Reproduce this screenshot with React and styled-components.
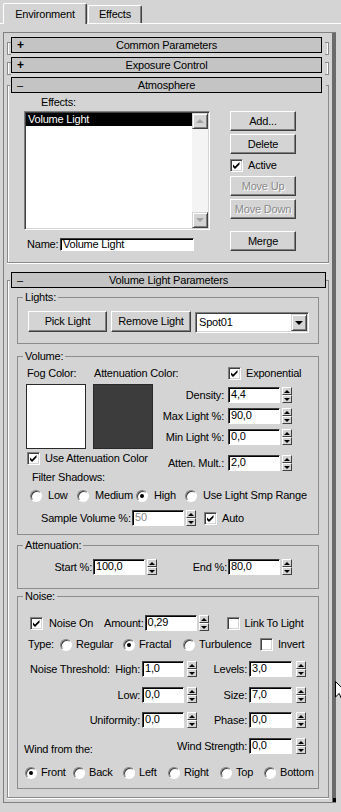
import React from "react";
import styled, { createGlobalStyle, css } from "styled-components";

const BG = "#d4d4d4";
const FONT = '"Liberation Sans", Arial, sans-serif';

const GlobalStyle = createGlobalStyle`
  html, body { margin: 0; padding: 0; background: ${BG}; }
  body {
    font-family: ${FONT};
    font-size: 11px;
    letter-spacing: -0.2px;
    line-height: 13px;
    color: #000;
  }
  * { box-sizing: border-box; }
`;

const Page = styled.div`
  position: relative;
  width: 341px;
  height: 812px;
  overflow: hidden;
  background: ${BG};
`;

/* ---------- tabs ---------- */
const TabBar = styled.div`
  display: flex;
  align-items: flex-end;
  height: 24px;
  padding-left: 3px;
  box-shadow: inset 0 -1px 0 #fff;
`;

const Tab = styled.div`
  display: flex;
  align-items: center;
  justify-content: center;
  flex: none;
  width: ${(p) => p.$w}px;
  height: ${(p) => (p.$active ? 21 : 18)}px;
  margin: 0 0 ${(p) => (p.$active ? 0 : 1)}px ${(p) => (p.$active ? 0 : 1)}px;
  background: ${BG};
  border-top: 1px solid #fff;
  border-left: 1px solid #fff;
  border-right: 1px solid #404040;
  box-shadow: inset -1px 0 0 #808080;
  border-radius: 2px 2px 0 0;
`;

/* ---------- rollout panel ---------- */
const Panel = styled.div`
  display: flex;
  width: 333px;
  margin: 8px 0 0 3px;
  border: 1px solid #808080;
  border-right: none;
`;

const PanelContent = styled.div`
  flex: 0 0 328px;
  min-width: 0;
  display: flex;
  flex-direction: column;
  padding: 4px 3px 4px 3px;
`;

const ScrollStrip = styled.div`
  flex: 0 0 4px;
  background: #6b6b6b;
  display: flex;
  flex-direction: column;
  justify-content: flex-end;
`;

const ScrollEnd = styled.div`
  width: 3px;
  height: 4px;
  margin-left: 1px;
  background: #000;
`;

const Rollout = styled.section`
  position: relative;
  min-width: 0;
  padding: 0 ${(p) => p.$pr}px 0 4px;
  margin-bottom: ${(p) => p.$mb || 0}px;
  &::before,
  &::after {
    content: "";
    position: absolute;
    pointer-events: none;
  }
  ${(p) =>
    p.$open
      ? css`
          &::before {
            left: 0;
            right: 0;
            top: 8px;
            bottom: 0;
            border: 1px solid #8a8a8a;
            border-top: none;
            box-shadow: inset 1px 0 0 #fff, 0 1px 0 #fff;
          }
          &::after {
            left: 0;
            right: 0;
            top: 8px;
            height: 1px;
            background: linear-gradient(
              to right,
              #8a8a8a 3px,
              transparent 3px,
              transparent calc(100% - 3px),
              #8a8a8a calc(100% - 3px)
            );
          }
        `
      : css`
          &::before {
            left: 0;
            top: 5px;
            width: 3px;
            height: 11px;
            border: 1px solid #8a8a8a;
            border-right: none;
            box-shadow: inset 1px 0 0 #fff;
          }
          &::after {
            right: 0;
            top: 5px;
            width: 3px;
            height: 11px;
            border: 1px solid #8a8a8a;
            border-left: none;
            box-shadow: inset -1px 0 0 #fff;
          }
        `}
`;

const RollHeader = styled.div`
  position: relative;
  z-index: 1;
  display: grid;
  grid-template-columns: 20px 1fr 20px;
  align-items: center;
  height: 16px;
  border: 1px solid #000;
  background: #c4c4c4;
`;

const Sign = styled.span`
  padding-left: 5px;
  font-weight: ${(p) => (p.$plus ? 700 : 400)};
  font-size: ${(p) => (p.$plus ? 12 : 11)}px;
  line-height: 13px;
`;

const Title = styled.span`
  text-align: center;
  white-space: nowrap;
  line-height: 13px;
`;

const RolloutHead = ({ sign, title }) => (
  <RollHeader>
    <Sign $plus={sign === "+"}>{sign}</Sign>
    <Title>{title}</Title>
    <span />
  </RollHeader>
);

/* ---------- common controls ---------- */
const Button = styled.div`
  display: flex;
  align-items: center;
  justify-content: center;
  flex: none;
  width: ${(p) => p.$w}px;
  height: ${(p) => p.$h || 20}px;
  margin-top: ${(p) => p.$mt || 0}px;
  background: ${BG};
  border: 1px solid;
  border-color: #fff #404040 #404040 #fff;
  box-shadow: inset -1px -1px 0 #808080;
  white-space: nowrap;
  color: ${(p) => (p.$disabled ? "#8a8a8a" : "#000")};
  text-shadow: ${(p) => (p.$disabled ? "1px 1px 0 #fff" : "none")};
`;

const Arrow = styled.span`
  width: 0;
  height: 0;
  border-left: ${(p) => p.$s}px solid transparent;
  border-right: ${(p) => p.$s}px solid transparent;
  ${(p) =>
    p.$dir === "up"
      ? `border-bottom: ${p.$h}px solid ${p.$c};`
      : `border-top: ${p.$h}px solid ${p.$c};`}
`;

const NumBox = styled.div`
  flex: none;
  width: ${(p) => p.$w}px;
  height: ${(p) => p.$h || 16}px;
  background: #fff;
  border: 1px solid;
  border-color: #404040 #fff #fff #404040;
  box-shadow: inset 1px 1px 0 #000;
  padding-left: 2px;
  line-height: ${(p) => (p.$h ? p.$h - 2 : 12)}px;
  white-space: nowrap;
  overflow: hidden;
  color: ${(p) => (p.$dim ? "#8a8a8a" : "#000")};
`;

const Spinner = styled.span`
  display: flex;
  flex-direction: column;
  flex: none;
  width: 10px;
  height: 16px;
  margin-left: ${(p) => p.$ml}px;
`;

const SpinHalf = styled.span`
  flex: 1;
  display: flex;
  align-items: center;
  justify-content: center;
  background: ${BG};
  border: 1px solid;
  border-color: #fff #404040 #404040 #fff;
`;

const FieldWrap = styled.div`
  display: flex;
  align-items: center;
  flex: none;
`;

const FieldLabel = styled.span`
  white-space: nowrap;
  margin-right: ${(p) => p.$gap}px;
  ${(p) => (p.$w ? `width: ${p.$w}px; text-align: right;` : "")}
`;

const Field = ({ label, value, lw, gap = 2, iw = 52, sg = 2, dim }) => (
  <FieldWrap>
    {label && (
      <FieldLabel $w={lw} $gap={gap}>
        {label}
      </FieldLabel>
    )}
    <NumBox $w={iw} $dim={dim}>
      {value}
    </NumBox>
    <Spinner $ml={sg}>
      <SpinHalf>
        <Arrow $dir="up" $s={3} $h={3} $c="#000" />
      </SpinHalf>
      <SpinHalf>
        <Arrow $dir="down" $s={3} $h={3} $c="#000" />
      </SpinHalf>
    </Spinner>
  </FieldWrap>
);

const CheckBox = styled.span`
  display: flex;
  flex: none;
  width: 13px;
  height: 13px;
  background: #fff;
  border: 1px solid;
  border-color: #808080 #fff #fff #808080;
  box-shadow: inset 1px 1px 0 #404040, inset -1px -1px 0 ${BG};
`;

const OptionWrap = styled.div`
  display: flex;
  align-items: center;
  flex: none;
  height: 13px;
  white-space: nowrap;
  margin-top: ${(p) => p.$mt || 0}px;
  margin-left: ${(p) => p.$ml || 0}px;
  ${(p) => (p.$w ? `width: ${p.$w}px;` : "")}
`;

const OptionText = styled.span`
  margin-left: ${(p) => p.$gap}px;
`;

const Check = ({ label, checked, gap = 5, mt, ml, w }) => (
  <OptionWrap $mt={mt} $ml={ml} $w={w}>
    <CheckBox>
      {checked && (
        <svg width="11" height="11" viewBox="0 0 11 11">
          <polygon points="2,4.5 4,6.5 8.5,2 8.5,4.5 4,9 2,7" fill="#000" />
        </svg>
      )}
    </CheckBox>
    <OptionText $gap={gap}>{label}</OptionText>
  </OptionWrap>
);

const RadioDot = styled.span`
  position: relative;
  flex: none;
  width: 12px;
  height: 12px;
  border-radius: 50%;
  background: #fff;
  border: 1px solid;
  border-color: #808080 #fff #fff #808080;
  box-shadow: inset 1px 1px 0 #404040;
  &::after {
    content: "";
    display: ${(p) => (p.$on ? "block" : "none")};
    position: absolute;
    left: 3px;
    top: 3px;
    width: 4px;
    height: 4px;
    border-radius: 50%;
    background: #000;
  }
`;

const Radio = ({ label, on, w, gap = 6 }) => (
  <OptionWrap $w={w}>
    <RadioDot $on={on} />
    <OptionText $gap={gap}>{label}</OptionText>
  </OptionWrap>
);

/* ---------- atmosphere ---------- */
const AtmosBody = styled.div`
  display: flex;
  flex-direction: column;
  padding: 0 0 12px 13px;
`;

const EffectsLabel = styled.div`
  margin: 3px 0 0 17px;
`;

const AtmosRow = styled.div`
  display: flex;
  margin-top: 2px;
`;

const ListCol = styled.div`
  display: flex;
  flex-direction: column;
  width: 186px;
`;

const ListBox = styled.div`
  display: flex;
  height: 119px;
  padding: 1px;
  border: 1px solid;
  border-color: #808080 #fff #fff #808080;
  box-shadow: inset 1px 1px 0 #404040, inset -1px -1px 0 ${BG};
`;

const ListItems = styled.div`
  flex: 1;
  background: #fff;
`;

const ListItem = styled.div`
  height: 13px;
  padding-left: 2px;
  line-height: 13px;
  background: ${(p) => (p.$selected ? "#000" : "transparent")};
  color: ${(p) => (p.$selected ? "#fff" : "#000")};
`;

const VScroll = styled.div`
  display: flex;
  flex-direction: column;
  width: 16px;
`;

const ScrollBtn = styled.div`
  display: flex;
  align-items: center;
  justify-content: center;
  height: 16px;
  background: ${BG};
  border: 1px solid;
  border-color: ${BG} #404040 #404040 ${BG};
  box-shadow: inset 1px 1px 0 #fff, inset -1px -1px 0 #808080;
`;

const ScrollTrack = styled.div`
  flex: 1;
  background: #f4f4f4;
`;

const NameRow = styled.div`
  display: flex;
  align-items: center;
  margin-top: 8px;
  padding-left: 3px;
`;

const NameLabel = styled.span`
  width: 33px;
`;

const ButtonCol = styled.div`
  display: flex;
  flex-direction: column;
  margin-left: 20px;
`;

/* ---------- volume light params ---------- */
const VlpBody = styled.div`
  display: flex;
  flex-direction: column;
  padding: 0 7px 9px 6px;
`;

const Group = styled.fieldset`
  margin: ${(p) => p.$mt}px 0 0 0;
  padding: 0;
  border: 1px solid #8c8c8c;
  min-width: 0;
`;

const Legend = styled.legend`
  margin-left: 5px;
  padding: 0 2px;
  line-height: 13px;
`;

const GroupBody = styled.div`
  display: flex;
  flex-direction: column;
  padding: ${(p) => p.$pad};
`;

const LightsRow = styled.div`
  display: flex;
  align-items: flex-start;
  gap: 4px;
`;

const DropDown = styled.div`
  display: flex;
  flex: none;
  width: 114px;
  height: 21px;
  margin-top: 1px;
  padding: 1px;
  background: #fff;
  border: 1px solid;
  border-color: #808080 #fff #fff #808080;
  box-shadow: inset 1px 1px 0 #404040, inset -1px -1px 0 ${BG};
`;

const DropText = styled.span`
  flex: 1;
  padding-left: 2px;
  line-height: 17px;
`;

const DropBtn = styled.span`
  display: flex;
  align-items: center;
  justify-content: center;
  width: 16px;
  background: ${BG};
  border: 1px solid;
  border-color: ${BG} #404040 #404040 ${BG};
  box-shadow: inset 1px 1px 0 #fff, inset -1px -1px 0 #808080;
`;

const VolumeTop = styled.div`
  display: flex;
  justify-content: space-between;
`;

const LeftCol = styled.div`
  display: flex;
  flex-direction: column;
  width: 127px;
`;

const SwatchLabels = styled.div`
  display: flex;
  height: 13px;
`;

const SwatchLabel = styled.span`
  flex: none;
  width: ${(p) => p.$w}px;
  padding-left: 1px;
  white-space: nowrap;
`;

const Swatches = styled.div`
  display: flex;
  gap: 7px;
  margin-top: 4px;
`;

const Swatch = styled.div`
  width: 60px;
  height: 65px;
  background: ${(p) => p.$c};
  border: 1px solid #2a2a2a;
`;

const RightCol = styled.div`
  display: flex;
  flex-direction: column;
  width: 132px;
`;

const SpinRow = styled.div`
  display: flex;
  justify-content: flex-end;
  margin-top: ${(p) => p.$mt || 0}px;
`;

const SubLabel = styled.div`
  margin-left: ${(p) => p.$ml || 0}px;
  margin-top: ${(p) => p.$mt || 0}px;
`;

const OptRow = styled.div`
  display: flex;
  align-items: center;
  min-width: 0;
  height: ${(p) => p.$h || 13}px;
  margin-top: ${(p) => p.$mt || 0}px;
  padding-left: ${(p) => p.$pl || 0}px;
`;

const AttRow = styled.div`
  display: flex;
`;

const Cell = styled.div`
  display: flex;
  justify-content: flex-end;
  align-items: ${(p) => p.$align || "center"};
  ${(p) => (p.$w ? `flex: 0 0 auto; min-width: ${p.$w}px;` : "flex: 1;")}
`;

const NoiseRow = styled.div`
  display: flex;
  align-items: ${(p) => p.$align || "center"};
  margin-top: ${(p) => p.$mt || 0}px;
  padding-left: ${(p) => p.$pl || 0}px;
`;

const LeadText = styled.span`
  margin-right: auto;
  white-space: nowrap;
  margin-bottom: ${(p) => p.$mb || 0}px;
`;

const Cursor = styled.svg`
  position: absolute;
  left: 335px;
  top: 681px;
`;

export default function App() {
  return (
    <>
      <GlobalStyle />
      <Page>
        <TabBar>
          <Tab $active $w={84}>
            Environment
          </Tab>
          <Tab $w={54}>Effects</Tab>
        </TabBar>

        <Panel>
          <PanelContent>
            <Rollout $pr={7} $mb={4}>
              <RolloutHead sign="+" title="Common Parameters" />
            </Rollout>
            <Rollout $pr={7} $mb={4}>
              <RolloutHead sign="+" title="Exposure Control" />
            </Rollout>

            <Rollout $open $pr={7} $mb={9}>
              <RolloutHead sign="–" title="Atmosphere" />
              <AtmosBody>
                <EffectsLabel>Effects:</EffectsLabel>
                <AtmosRow>
                  <ListCol>
                    <ListBox>
                      <ListItems>
                        <ListItem $selected>Volume Light</ListItem>
                      </ListItems>
                      <VScroll>
                        <ScrollBtn>
                          <Arrow $dir="up" $s={4} $h={4} $c="#a0a0a0" />
                        </ScrollBtn>
                        <ScrollTrack />
                        <ScrollBtn>
                          <Arrow $dir="down" $s={4} $h={4} $c="#a0a0a0" />
                        </ScrollBtn>
                      </VScroll>
                    </ListBox>
                    <NameRow>
                      <NameLabel>Name:</NameLabel>
                      <NumBox $w={134} $h={13}>
                        Volume Light
                      </NumBox>
                    </NameRow>
                  </ListCol>
                  <ButtonCol>
                    <Button $w={66}>Add...</Button>
                    <Button $w={66} $mt={3}>
                      Delete
                    </Button>
                    <Check label="Active" checked mt={5} gap={5} />
                    <Button $w={66} $mt={4} $disabled>
                      Move Up
                    </Button>
                    <Button $w={66} $mt={3} $disabled>
                      Move Down
                    </Button>
                    <Button $w={66} $mt={12}>
                      Merge
                    </Button>
                  </ButtonCol>
                </AtmosRow>
              </AtmosBody>
            </Rollout>

            <Rollout $open $pr={3}>
              <RolloutHead sign="–" title="Volume Light Parameters" />
              <VlpBody>
                <Group $mt={3}>
                  <Legend>Lights:</Legend>
                  <GroupBody $pad="7px 9px 10px 10px">
                    <LightsRow>
                      <Button $w={79} $h={21}>
                        Pick Light
                      </Button>
                      <Button $w={80} $h={21}>
                        Remove Light
                      </Button>
                      <DropDown>
                        <DropText>Spot01</DropText>
                        <DropBtn>
                          <Arrow $dir="down" $s={4} $h={4} $c="#000" />
                        </DropBtn>
                      </DropDown>
                    </LightsRow>
                  </GroupBody>
                </Group>

                <Group $mt={6}>
                  <Legend>Volume:</Legend>
                  <GroupBody $pad="4px 26px 8px 8px">
                    <VolumeTop>
                      <LeftCol>
                        <SwatchLabels>
                          <SwatchLabel $w={67}>Fog Color:</SwatchLabel>
                          <SwatchLabel $w={60}>Attenuation Color:</SwatchLabel>
                        </SwatchLabels>
                        <Swatches>
                          <Swatch $c="#ffffff" />
                          <Swatch $c="#3c3c3c" />
                        </Swatches>
                        <Check label="Use Attenuation Color" checked mt={3} ml={1} gap={5} />
                      </LeftCol>
                      <RightCol>
                        <Check label="Exponential" checked ml={68} gap={5} />
                        <SpinRow $mt={7}>
                          <Field label="Density:" value="4,4" gap={4} />
                        </SpinRow>
                        <SpinRow $mt={5}>
                          <Field label="Max Light %:" value="90,0" gap={4} />
                        </SpinRow>
                        <SpinRow $mt={5}>
                          <Field label="Min Light %:" value="0,0" gap={4} />
                        </SpinRow>
                        <SpinRow $mt={10}>
                          <Field label="Atten. Mult.:" value="2,0" gap={4} />
                        </SpinRow>
                      </RightCol>
                    </VolumeTop>
                    <SubLabel $ml={6}>Filter Shadows:</SubLabel>
                    <OptRow $mt={5} $pl={4}>
                      <Radio label="Low" w={47} />
                      <Radio label="Medium" w={59} />
                      <Radio label="High" on w={49} />
                      <Radio label="Use Light Smp Range" />
                    </OptRow>
                    <OptRow $mt={8} $h={16} $pl={15}>
                      <Field label="Sample Volume %:" lw={87} gap={4} value="50" dim />
                      <Check label="Auto" checked ml={8} gap={5} />
                    </OptRow>
                  </GroupBody>
                </Group>

                <Group $mt={4}>
                  <Legend>Attenuation:</Legend>
                  <GroupBody $pad="7px 26px 13px 0">
                    <AttRow>
                      <Cell>
                        <Field label="Start %:" value="100,0" gap={1} />
                      </Cell>
                      <Cell $w={135}>
                        <Field label="End %:" value="80,0" gap={1} />
                      </Cell>
                    </AttRow>
                  </GroupBody>
                </Group>

                <Group $mt={1}>
                  <Legend>Noise:</Legend>
                  <GroupBody $pad="12px 12px 9px 0">
                    <NoiseRow $pl={12}>
                      <Check label="Noise On" checked w={74} gap={6} />
                      <Field label="Amount:" value="0,29" gap={1} />
                      <Check label="Link To Light" ml={18} gap={5} />
                    </NoiseRow>
                    <OptRow $mt={7} $pl={10}>
                      <OptionWrap $w={32}>Type:</OptionWrap>
                      <Radio label="Regular" w={63} gap={4} />
                      <Radio label="Fractal" on w={60} gap={4} />
                      <Radio label="Turbulence" w={77} gap={4} />
                      <Check label="Invert" gap={5} />
                    </OptRow>
                    <NoiseRow $mt={10} $pl={12}>
                      <Cell>
                        <LeadText>Noise Threshold:</LeadText>
                        <Field label="High:" value="1,0" iw={42} sg={3} />
                      </Cell>
                      <Cell $w={109}>
                        <Field label="Levels:" value="3,0" iw={43} sg={4} />
                      </Cell>
                    </NoiseRow>
                    <NoiseRow $mt={10} $pl={12}>
                      <Cell>
                        <Field label="Low:" value="0,0" iw={42} sg={3} />
                      </Cell>
                      <Cell $w={109}>
                        <Field label="Size:" value="7,0" iw={43} sg={4} />
                      </Cell>
                    </NoiseRow>
                    <NoiseRow $mt={9} $pl={12}>
                      <Cell>
                        <Field label="Uniformity:" value="0,0" iw={42} sg={3} />
                      </Cell>
                      <Cell $w={109}>
                        <Field label="Phase:" value="0,0" iw={43} sg={4} />
                      </Cell>
                    </NoiseRow>
                    <NoiseRow $mt={10} $pl={6} $align="flex-end">
                      <LeadText $mb={-2}>Wind from the:</LeadText>
                      <Field label="Wind Strength:" value="0,0" iw={43} sg={4} />
                    </NoiseRow>
                    <OptRow $mt={12} $pl={7}>
                      <Radio label="Front" on w={48} gap={4} />
                      <Radio label="Back" w={50} gap={4} />
                      <Radio label="Left" w={45} gap={4} />
                      <Radio label="Right" w={52} gap={4} />
                      <Radio label="Top" w={44} gap={4} />
                      <Radio label="Bottom" gap={4} />
                    </OptRow>
                  </GroupBody>
                </Group>
              </VlpBody>
            </Rollout>
          </PanelContent>
          <ScrollStrip>
            <ScrollEnd />
          </ScrollStrip>
        </Panel>

        <Cursor width="12" height="20" viewBox="0 0 12 20">
          <path
            d="M0.5 0.5 L0.5 16 L4.2 12.4 L6.8 18.5 L9 17.6 L6.4 11.6 L11.5 11.6 Z"
            fill="#fff"
            stroke="#000"
            strokeWidth="1"
          />
        </Cursor>
      </Page>
    </>
  );
}
